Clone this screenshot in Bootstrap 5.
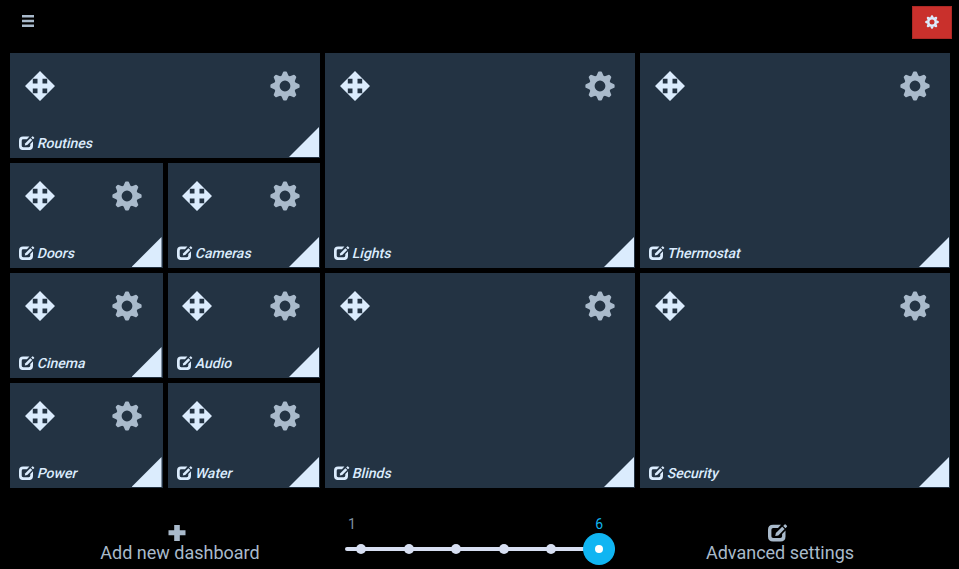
<!DOCTYPE html>
<html lang="en">
<head>
<meta charset="utf-8">
<meta name="viewport" content="width=device-width, initial-scale=1">
<title>Dashboard</title>
<link href="https://cdn.jsdelivr.net/npm/bootstrap@5.3.0/dist/css/bootstrap.min.css" rel="stylesheet">
<style>
body{background:#000;color:#a9bacb;font-family:Roboto,"Liberation Sans",sans-serif;height:569px;overflow:hidden}
svg{display:block;fill:currentColor;flex:none}
.topbar{height:53px;padding:6px 7px 0 22px}
.menu-btn{padding:9px 0 0;color:#a9bacb;line-height:1;border:0}
.config-btn{width:40px;height:33px;background:#c9302c;border:1px solid #ac2925;color:#dbecfd;border-radius:0;padding:0}
.tiles{display:grid;grid-template-columns:repeat(6,152.5px);grid-template-rows:repeat(4,105px);gap:5px;margin-left:10px}
.tile{background:#233343;color:#dbecfd;padding:18px 20px 6px 15px}
.half-a{padding-right:20.5px}
.half-b{padding-left:14.5px}
.half-b .tile-name{margin-left:-5.5px}
.wide{grid-column:span 2}
.tall{grid-column:span 2;grid-row:span 2}
.cog{color:#a9bacb}
.tile-name{margin-left:-6px;gap:3px;font-size:14px;line-height:18px;font-weight:500}
.tile-name span{transform:skewX(-14deg)}
.corner{right:1px;bottom:1px;width:30px;height:30px;background:#dbecfd;clip-path:polygon(100% 0,100% 100%,0 100%)}
.bottombar{height:81px}
.action{width:320px;flex:none;padding:36px 0 0;font-size:18px;line-height:20px}
.action svg{margin-right:6px;margin-bottom:1px}
.action-add{margin-left:20px}
.action-adv{margin-left:-25px}
.action-adv svg{margin-right:4px}
.pager{width:270px;flex:none;margin:0 30px 0 5px;padding-top:27px}
.pager-labels{font-size:14px;line-height:18px;height:18px;color:#8091a2;padding:0 12px 0 3px}
.pager-now{color:#10b5ee}
.rail{height:4px;border-radius:2px;background:#d7dff2;margin-top:14px;padding:0 0 0 11px}
.dot{width:10px;height:10px;border-radius:50%;background:#d7dff2;flex:none}
.knob{width:32px;height:32px;border-radius:50%;background:#10b5f2;flex:none;margin-left:-11px}
.knob span{width:8px;height:8px;border-radius:50%;background:#fff}
</style>
<script src="https://cdn.jsdelivr.net/npm/bootstrap@5.3.0/dist/js/bootstrap.bundle.min.js"></script>
</head>
<body>
<svg class="d-none" aria-hidden="true">
<defs>
<symbol id="i-move" viewBox="0 0 30 30"><path fill-rule="evenodd" d="M15 0 30 15 15 30 0 15ZM7.8 7.8v4.7h4.7V7.8ZM17.5 7.8v4.7h4.7V7.8ZM7.8 17.5v4.7h4.7V17.5ZM17.5 17.5v4.7h4.7V17.5Z"/></symbol>
<symbol id="i-cog" viewBox="-15 -15 30 30">
<path fill-rule="evenodd" d="M0-10.8A10.8 10.8 0 1 1 0 10.8A10.8 10.8 0 1 1 0-10.8ZM0-5.4A5.4 5.4 0 1 0 0 5.4A5.4 5.4 0 1 0 0-5.4Z"/>
<path id="tooth" d="M-3.7-9.8-2.1-13.6Q-1.8-14.6-1-14.6H1Q1.8-14.6 2.1-13.6L3.7-9.8Z"/><use href="#tooth" transform="rotate(45)"/><use href="#tooth" transform="rotate(90)"/><use href="#tooth" transform="rotate(135)"/><use href="#tooth" transform="rotate(180)"/><use href="#tooth" transform="rotate(225)"/><use href="#tooth" transform="rotate(270)"/><use href="#tooth" transform="rotate(315)"/>
</symbol>
<symbol id="i-edit" viewBox="0 0 20 18"><path d="M13 .7 10 4H5.2Q3.4 4 3.4 5.8V12.3Q3.4 14.1 5.2 14.1H12.3Q14.1 14.1 14.1 12.3V9.9L17.5 6.5V12.5Q17.5 17.6 12.4 17.6H5.1Q0 17.6 0 12.5V5.8Q0 .7 5.1 .7Z"/><path d="M14.2 2.7 16.6 5.1 10.3 11.4 7.2 12 7.9 9.1Z"/><path d="M15.2 1.9 16.6.5Q17.1 0 17.6.5L18.9 1.8Q19.4 2.3 18.9 2.8L17.5 4.2Z"/></symbol>
</defs>
</svg>
<header class="topbar d-flex justify-content-between align-items-start">
<button class="btn menu-btn" aria-label="Menu"><svg width="12" height="12"><path d="M0 0h12v2.6H0zM0 4.7h12v2.6H0zM0 9.4h12v2.6H0z"/></svg></button>
<button class="btn config-btn d-flex justify-content-center pt-2" aria-label="Settings"><svg width="14" height="14"><use href="#i-cog"/></svg></button>
</header>
<main class="tiles" id="tiles"></main>
<footer class="bottombar d-flex align-items-start">
<div class="action action-add d-flex flex-column align-items-center"><svg width="18" height="18"><path d="M6.2 1h5.6v5.2H17.5v5H11.8v5.8H6.2V11.2H.5v-5H6.2z"/></svg><span>Add new dashboard</span></div>
<div class="pager">
<div class="pager-labels d-flex justify-content-between"><span>1</span><span class="pager-now">6</span></div>
<div class="rail d-flex align-items-center justify-content-between"><span class="dot"></span><span class="dot"></span><span class="dot"></span><span class="dot"></span><span class="dot"></span><span class="knob d-flex align-items-center justify-content-center"><span></span></span></div>
</div>
<div class="action action-adv d-flex flex-column align-items-center"><svg width="20" height="18"><use href="#i-edit"/></svg><span>Advanced settings</span></div>
</footer>
<script>
const tiles = [['Routines','wide'],['Lights','tall'],['Thermostat','tall'],['Doors','half-a'],['Cameras','half-b'],['Cinema','half-a'],['Audio','half-b'],['Blinds','tall'],['Security','tall'],['Power','half-a'],['Water','half-b']];
document.getElementById('tiles').innerHTML = tiles.map(([name, size]) => `
<section class="tile ${size} position-relative d-flex flex-column justify-content-between">
<div class="d-flex justify-content-between"><svg width="30" height="30"><use href="#i-move"/></svg><svg class="cog" width="30" height="30"><use href="#i-cog"/></svg></div>
<div class="tile-name d-flex align-items-center"><svg width="16" height="14.4"><use href="#i-edit"/></svg><span>${name}</span></div>
<span class="corner position-absolute"></span>
</section>`).join('');
</script>
</body>
</html>
